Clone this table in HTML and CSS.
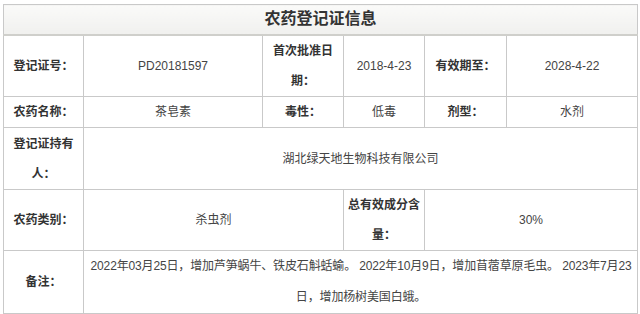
FILE: index.html
```html
<!DOCTYPE html>
<html lang="zh-CN">
<head>
<meta charset="utf-8">
<title>农药登记证信息</title>
<link rel="stylesheet" href="styles.css">
</head>
<body>
<table class="info">
  <colgroup>
    <col class="c1"><col class="c2"><col class="c3"><col class="c4"><col class="c5"><col class="c6">
  </colgroup>
  <tr class="r-head">
    <th class="title" colspan="6">农药登记证信息</th>
  </tr>
  <tr class="r-tall">
    <td class="label">登记证号：</td>
    <td class="value">PD20181597</td>
    <td class="label">首次批准日期：</td>
    <td class="value">2018-4-23</td>
    <td class="label">有效期至：</td>
    <td class="value">2028-4-22</td>
  </tr>
  <tr class="r-short">
    <td class="label">农药名称：</td>
    <td class="value">茶皂素</td>
    <td class="label">毒性：</td>
    <td class="value">低毒</td>
    <td class="label">剂型：</td>
    <td class="value">水剂</td>
  </tr>
  <tr class="r-tall">
    <td class="label">登记证持有人：</td>
    <td class="value" colspan="5">湖北绿天地生物科技有限公司</td>
  </tr>
  <tr class="r-mid">
    <td class="label">农药类别：</td>
    <td class="value" colspan="2">杀虫剂</td>
    <td class="label">总有效成分含量：</td>
    <td class="value" colspan="2">30%</td>
  </tr>
  <tr class="r-mid">
    <td class="label">备注：</td>
    <td class="value note" colspan="5">2022年03月25日，增加芦笋蜗牛、铁皮石斛蛞蝓。 2022年10月9日，增加苜蓿草原毛虫。 2023年7月23日，增加杨树美国白蛾。</td>
  </tr>
</table>
</body>
</html>
```

FILE: styles.css
```css
html, body {
  margin: 0;
  padding: 0;
  background: #ffffff;
}

body {
  padding: 4px 0 0 3px;
  font-family: "Liberation Sans", "Noto Sans CJK SC", sans-serif;
  font-size: 12px;
  color: #333333;
}

.info {
  width: 634px;
  table-layout: fixed;
  border-collapse: collapse;
  border: 1px solid #c9c9c9;
}

.c1 { width: 80px; }
.c2 { width: 179px; }
.c3 { width: 81px; }
.c4 { width: 81px; }
.c5 { width: 82px; }
.c6 { width: 131px; }

.info th,
.info td {
  border: 1px solid #c9c9c9;
  padding: 0 4px;
  line-height: 30px;
  text-align: center;
  vertical-align: middle;
}

.r-head { height: 30px; }
.r-tall { height: 62px; }
.r-short { height: 31px; }
.r-mid { height: 60px; }

.info .title {
  font-size: 16px;
  font-weight: bold;
  color: #333333;
  background: linear-gradient(#fafaf9, #f0f0ee);
  border-bottom: 2px solid #cfcfcb;
  line-height: 28px;
}

.label {
  font-weight: bold;
  color: #333333;
}

.value {
  color: #444444;
}

.info .note {
  padding: 0 1px 0 2px;
  letter-spacing: -0.15px;
  line-height: 31px;
}
```
